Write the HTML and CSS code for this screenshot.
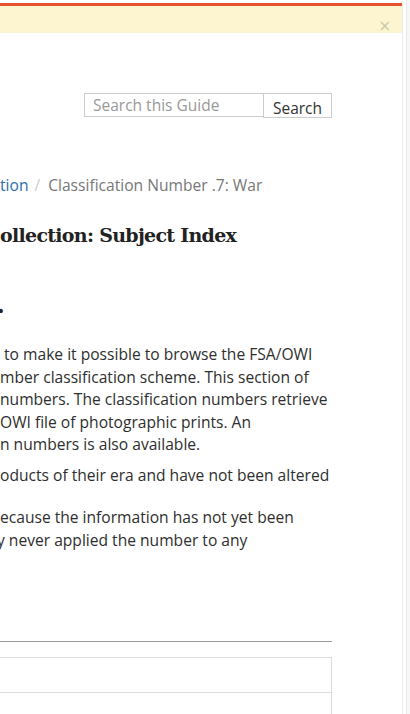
FILE: index.html
```
<!DOCTYPE html>
<html lang="en">
<head>
<meta charset="utf-8">
<title>FSA/OWI Collection: Subject Index</title>
<link rel="stylesheet" href="styles.css">
</head>
<body>
<div class="page">
  <div class="alert-line"></div>
  <div class="alert">
    <span class="alert-close">&times;</span>
  </div>
  <div class="main">
    <form class="search">
      <input class="search-input" type="text" placeholder="Search this Guide">
      <button class="search-btn" type="button">Search</button>
    </form>
    <nav class="crumbs">
      <a class="crumb-link" href="#">tion</a><span class="crumb-sep">/</span><span class="crumb-current">Classification Number .7: War</span>
    </nav>
    <h1 class="title">ollection: Subject Index</h1>
    <h2 class="subtitle"><span class="cut-dot">.</span></h2>
    <div class="text">
      <p class="para p1">
        <span class="line lead"> to make it possible to browse the FSA/OWI</span>
        <span class="line">mber classification scheme. This section of</span>
        <span class="line">numbers. The classification numbers retrieve</span>
        <span class="line">OWI file of photographic prints. An</span>
        <span class="line">n numbers is also available.</span>
      </p>
      <p class="para p2">
        <span class="line">oducts of their era and have not been altered</span>
      </p>
      <p class="para p3">
        <span class="line">ecause the information has not yet been</span>
        <span class="line cut">y never applied the number to any</span>
      </p>
    </div>
    <hr class="rule">
    <div class="table">
      <div class="row"></div>
      <div class="row"></div>
    </div>
  </div>
</div>
</body>
</html>
```
FILE: styles.css
```
html, body {
  margin: 0;
  padding: 0;
  background: #f7f7f7;
  overflow: hidden;
}
body {
  font-family: "Open Sans", "Liberation Sans", sans-serif;
  color: #333;
  width: 410px;
  height: 714px;
}
.page {
  width: 403px;
  height: 714px;
  background: #fff;
  padding-top: 3px;
  box-sizing: border-box;
  border-right: 1px solid #ececec;
  box-shadow: 3px 0 0 #fff, 4px 0 0 #e9e9e9;
  overflow: hidden;
}
.alert-line {
  height: 3px;
  background: #e5532f;
}
.alert {
  height: 27px;
  background: #fcf5cf;
  display: flex;
  justify-content: flex-end;
  align-items: flex-end;
  padding-right: 11px;
}
.alert-close {
  font-family: "DejaVu Sans", sans-serif;
  font-size: 15px;
  line-height: 15px;
  color: #cdc7ad;
  margin-bottom: -1px;
}
.main {
  width: 332px;
}
.search {
  display: flex;
  justify-content: flex-end;
  margin: 60px 0 0 0;
  height: 24px;
}
.search-input {
  width: 179px;
  height: 24px;
  box-sizing: border-box;
  border: 1px solid #ccc;
  border-right: none;
  margin: 0;
  padding: 0 8px;
  font-family: "Open Sans", sans-serif;
  font-size: 15.5px;
  color: #555;
  outline: none;
}
.search-input::placeholder {
  color: #999;
}
.search-btn {
  width: 69px;
  height: 25px;
  box-sizing: border-box;
  border: 1px solid #ccc;
  background: #fff;
  margin: 0;
  padding: 5px 0 0 0;
  font-family: "Open Sans", sans-serif;
  font-size: 15.5px;
  color: #333;
  line-height: 18px;
}
.crumbs {
  margin-top: 58px;
  font-size: 15.6px;
  line-height: 20px;
  color: #777;
  white-space: nowrap;
}
.crumb-link {
  color: #2b6ea6;
  text-decoration: none;
}
.crumb-sep {
  color: #ccc;
  padding: 0 8px 0 6px;
}
.title {
  margin: 27px 0 0 0;
  font-family: "DejaVu Serif", serif;
  font-weight: bold;
  font-size: 19px;
  letter-spacing: -0.7px;
  line-height: 26px;
  color: #222;
  white-space: nowrap;
}
.subtitle {
  margin: 43px 0 0 -3px;
  font-family: "DejaVu Serif", serif;
  font-weight: bold;
  font-size: 22px;
  line-height: 28px;
  color: #222;
}
.text {
  margin-top: 24px;
  font-size: 15.6px;
  line-height: 22.5px;
  white-space: nowrap;
  color: #2e2e2e;
}
.para {
  margin: 0;
}
.p1 {
  margin-bottom: 8.5px;
}
.p2 {
  margin-bottom: 19.5px;
}
.line {
  display: block;
}
.lead {
  white-space: pre;
}
.cut {
  margin-left: -3px;
}
.rule {
  margin: 90px 0 0 0;
  border: 0;
  border-top: 1px solid #9a9a9a;
  height: 0;
}
.table {
  margin-top: 15px;
  border-top: 1px solid #ddd;
  border-right: 1px solid #ddd;
  width: 331px;
}
.row {
  height: 34px;
  border-bottom: 1px solid #ddd;
}
```
